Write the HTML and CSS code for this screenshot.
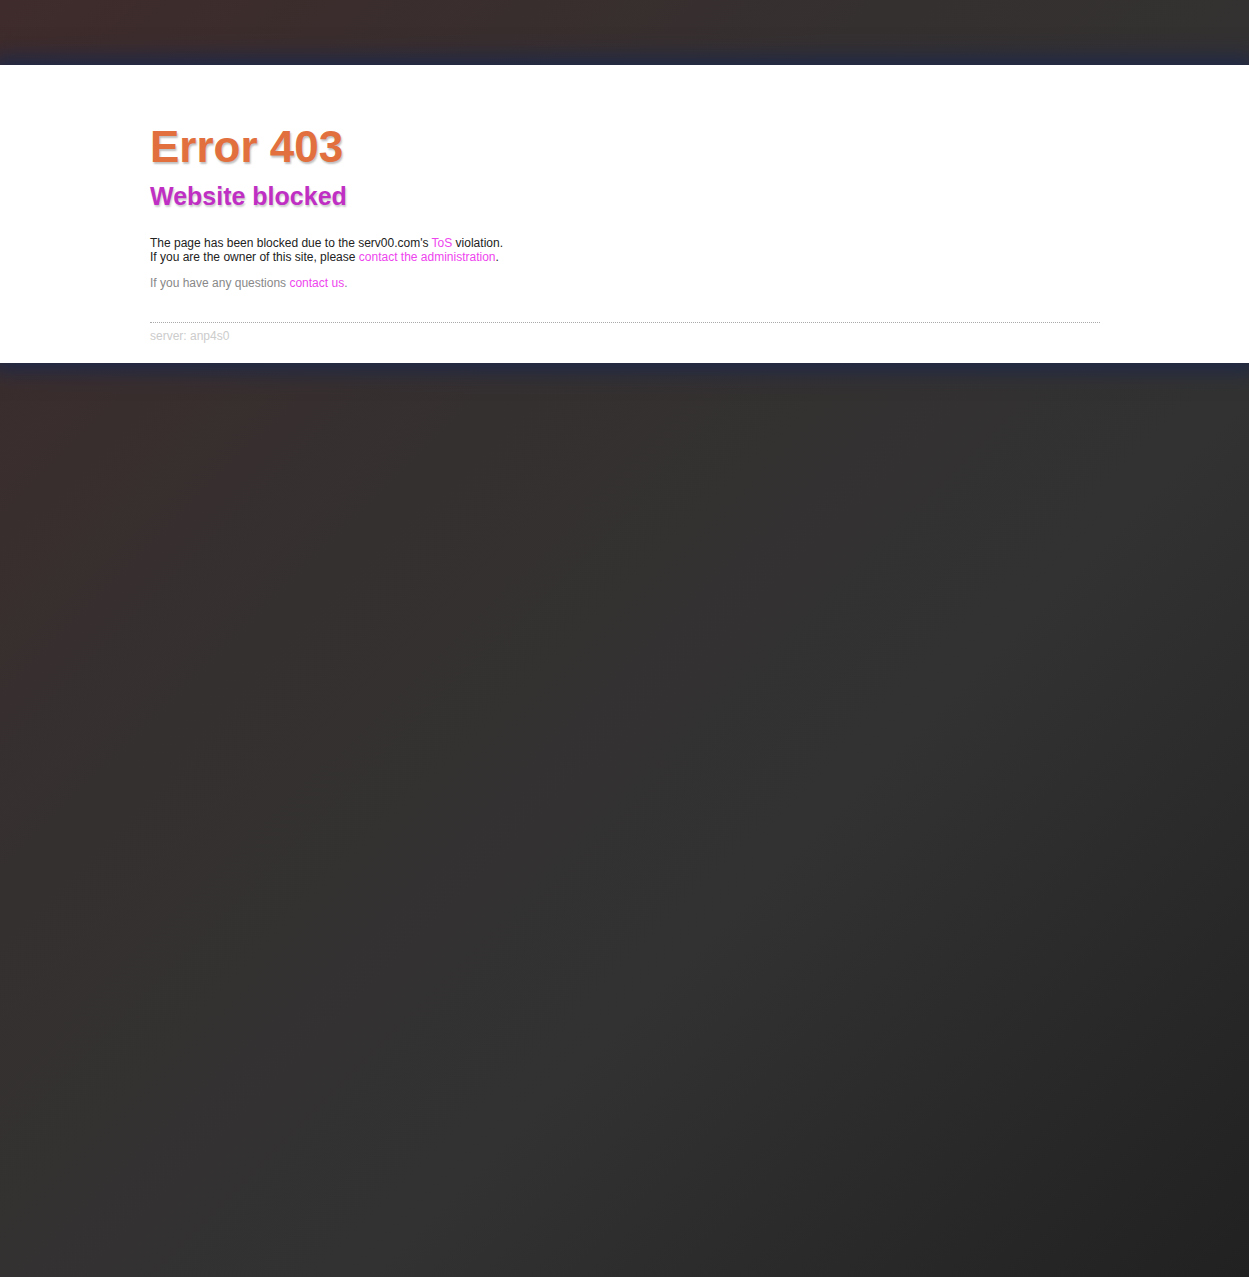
FILE: index.html
```html
<!DOCTYPE html>
<html lang="en">
<head>
<meta charset="utf-8">
<title>Error 403 - Website blocked</title>
<link rel="stylesheet" href="styles.css">
</head>
<body>
<div class="panel">
  <div class="content">
    <h1 class="title">Error 403</h1>
    <h2 class="subtitle">Website blocked</h2>
    <p class="msg">The page has been blocked due to the serv00.com's <a href="#">ToS</a> violation.<br>If you are the owner of this site, please <a href="#">contact the administration</a>.</p>
    <p class="questions">If you have any questions <a href="#">contact us</a>.</p>
    <div class="footer">server: anp4s0</div>
  </div>
</div>
</body>
</html>
```
FILE: styles.css
```css
html, body {
  margin: 0;
  padding: 0;
  min-height: 100%;
}
body {
  min-height: 1277px;
  background: linear-gradient(135deg, #3f2b2b 0%, #353030 35%, #323232 65%, #212121 100%);
  font-family: "Liberation Sans", Arial, sans-serif;
  padding-top: 65px;
  box-sizing: border-box;
}
.panel {
  background: #fff;
  box-shadow: 0 0 20px 8px #1f2948;
}
.content {
  width: 950px;
  margin-left: 150px;
  padding: 47px 0 20px;
}
.title {
  margin: 0;
  font-size: 44px;
  line-height: 70px;
  font-weight: bold;
  color: #e2703e;
  text-shadow: 1px 2px 2px rgba(0,0,0,0.25);
}
.subtitle {
  margin: 0;
  font-size: 25px;
  line-height: 28px;
  font-weight: bold;
  color: #c02fc4;
  text-shadow: 1px 2px 2px rgba(0,0,0,0.2);
}
.msg, .questions {
  font-size: 12px;
  line-height: 14px;
  margin: 0;
}
.msg {
  margin-top: 26px;
  color: #222;
}
.questions {
  margin-top: 12px;
  color: #888;
}
a {
  color: #ee44ee;
  text-decoration: none;
}
.footer {
  margin-top: 32px;
  border-top: 1px dotted #aaa;
  padding-top: 6px;
  font-size: 12px;
  line-height: 14px;
  color: #ccc;
}
```
